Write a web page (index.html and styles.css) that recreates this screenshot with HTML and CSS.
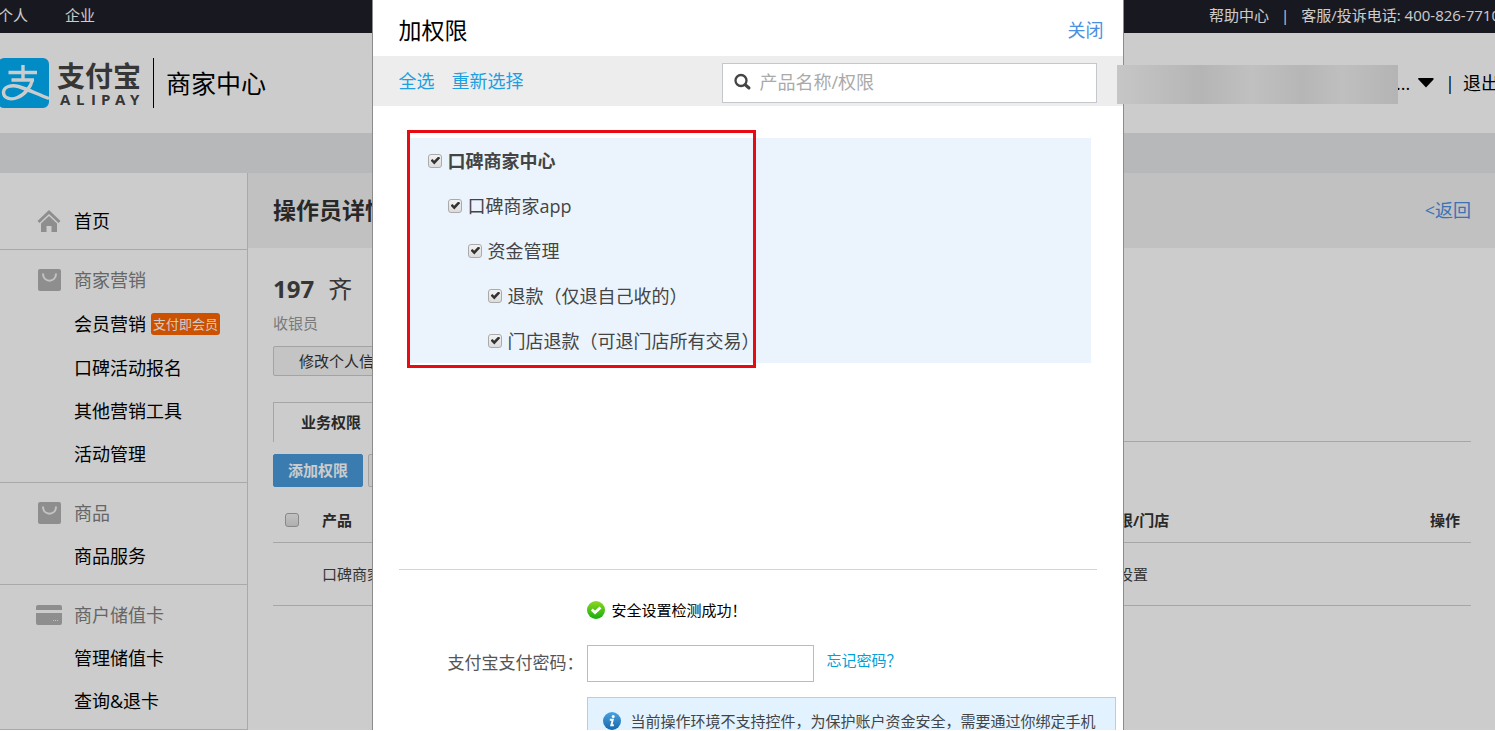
FILE: index.html
```html
<!DOCTYPE html>
<html lang="zh-CN">
<head>
<meta charset="utf-8">
<title>商家中心</title>
<meta name="viewport" content="width=device-width, initial-scale=1">
<link rel="stylesheet" href="styles.css">
</head>
<body>
<div class="app">
  <nav class="topbar">
    <a class="topbar-link" href="#">个人</a>
    <a class="topbar-link" href="#">企业</a>
    <div class="topbar-right">
      <a class="topbar-link" href="#">帮助中心</a>
      <span>|</span>
      <span>客服/投诉电话: 400-826-7710</span>
    </div>
  </nav>

  <header class="header">
    <svg class="logo" width="143" height="50" viewBox="0 0 143 50" role="img" aria-label="支付宝 ALIPAY">
      <rect x="-2" y="0" width="51" height="50" rx="6" fill="#02b0f8"/>
      <g fill="none" stroke="#fff" stroke-width="3.4">
        <path d="M8.500 14.500H37M23 7V22M11.500 22H34"/>
        <path d="M32.500 21.500C31 29 25 36.500 17.500 39.500C10.500 42.500 3.500 40 3.500 34.500C3.500 28.500 11.500 26.500 18.500 28.500C27 31 38 36.500 49 40.500"/>
      </g>
      <text class="logo-cn" x="57" y="29">支付宝</text>
      <text class="logo-en" x="60 76 91 101 115 130" y="47">ALIPAY</text>
    </svg>
    <span class="header-name">商家中心</span>
    <div class="user">
      <span>...</span>
      <svg width="16" height="10" viewBox="0 0 16 10" aria-hidden="true"><path d="M0 1Q0 0 1 0H15Q16 0 15.500 1.500L8 9.500L.5 1.500Z"/></svg>
      <span class="user-divider">|</span>
      <a class="user-exit" href="#">退出</a>
    </div>
  </header>
  <div class="band"></div>

  <div class="layout">
    <aside class="sidebar">
      <section class="group group-home">
        <a class="group-title is-home" href="#">
          <svg class="icon" width="26" height="24" viewBox="0 0 26 24"><path d="M13 1L24.500 12L22.500 14L13 5L3.500 14L1.500 12Z"/><path d="M13 7L21 14.500V23H15.500V17H10.500V23H5V14.500Z"/></svg>
          首页</a>
      </section>
      <section class="group">
        <h3 class="group-title">
          <svg class="icon" width="26" height="24" viewBox="0 0 26 24"><rect x="2" y="1" width="23" height="22" rx="2"/><path class="icon-line" d="M7 5.500C7 15 20 15 20 5.500"/></svg>
          商家营销</h3>
        <a class="item item-tagged" href="#">会员营销<span class="tag">支付即会员</span></a>
        <a class="item" href="#">口碑活动报名</a>
        <a class="item" href="#">其他营销工具</a>
        <a class="item" href="#">活动管理</a>
      </section>
      <section class="group">
        <h3 class="group-title">
          <svg class="icon" width="26" height="24" viewBox="0 0 26 24"><rect x="2" y="1" width="23" height="22" rx="2"/><path class="icon-line" d="M7 5.500C7 15 20 15 20 5.500"/></svg>
          商品</h3>
        <a class="item" href="#">商品服务</a>
      </section>
      <section class="group">
        <h3 class="group-title">
          <svg class="icon" width="26" height="24" viewBox="0 0 26 24"><path d="M0 7V4Q0 2 2 2H24Q26 2 26 4V7ZM0 10H26V20Q26 22 24 22H2Q0 22 0 20Z"/><path class="icon-dots" d="M17 17.500H23"/></svg>
          商户储值卡</h3>
        <a class="item" href="#">管理储值卡</a>
        <a class="item" href="#">查询&amp;退卡</a>
      </section>
    </aside>

    <main class="main">
      <div class="title-bar">
        <h1 class="title">操作员详情</h1>
        <a class="back" href="#">&lt;返回</a>
      </div>
      <div class="content">
        <div class="operator"><strong class="operator-id">197</strong><span>齐</span></div>
        <p class="role">收银员</p>
        <button class="btn btn-edit" type="button">修改个人信息</button>
        <div class="tabs"><button class="tab" type="button">业务权限</button></div>
        <div class="actions">
          <button class="btn btn-primary" type="button">添加权限</button>
          <button class="btn" type="button">删除权限</button>
        </div>
        <table class="perms">
          <thead>
            <tr><th class="col-check"><input class="check" type="checkbox" aria-label="全选产品"></th><th>产品</th><th class="col-store">权限/门店</th><th class="col-op">操作</th></tr>
          </thead>
          <tbody>
            <tr><td></td><td>口碑商家中心</td><td>未设置</td><td></td></tr>
          </tbody>
        </table>
      </div>
    </main>
  </div>
</div>

<div class="overlay">
  <div class="modal" role="dialog" aria-labelledby="modal-title">
    <div class="modal-head">
      <h2 class="modal-title" id="modal-title">加权限</h2>
      <a class="close" href="#">关闭</a>
    </div>
    <div class="toolbar">
      <a class="toolbar-link" href="#">全选</a>
      <a class="toolbar-link" href="#">重新选择</a>
      <label class="search">
        <svg width="18" height="18" viewBox="0 0 18 18" aria-hidden="true"><circle cx="7" cy="7.500" r="5.500" fill="none" stroke="#444" stroke-width="2.300"/><path d="M11.500 12L15 15" stroke="#444" stroke-width="3" stroke-linecap="round"/></svg>
        <input class="search-input" type="text" placeholder="产品名称/权限" aria-label="产品名称/权限">
      </label>
    </div>
    <div class="modal-body">
      <div class="tree-area">
        <div class="tree">
          <label class="node node-root"><input class="check" type="checkbox" checked>口碑商家中心</label>
          <label class="node level-1"><input class="check" type="checkbox" checked>口碑商家app</label>
          <label class="node level-2"><input class="check" type="checkbox" checked>资金管理</label>
          <label class="node level-3"><input class="check" type="checkbox" checked>退款（仅退自己收的）</label>
          <label class="node level-3"><input class="check" type="checkbox" checked>门店退款（可退门店所有交易）</label>
          <div class="highlight"></div>
        </div>
      </div>
      <form class="verify">
        <p class="verify-ok">
          <svg width="18" height="18" viewBox="0 0 18 18" aria-hidden="true">
            <defs><linearGradient id="ok" x2="0" y2="1"><stop offset="0" stop-color="#8fd820"/><stop offset="1" stop-color="#14ad10"/></linearGradient></defs>
            <circle cx="9" cy="9" r="9" fill="url(#ok)"/><path d="M4.800 8.500L8 11.500L13.500 6.500" fill="none" stroke="#fff" stroke-width="2.800"/></svg>
          安全设置检测成功！</p>
        <label class="verify-label" for="pay-password">支付宝支付密码：</label>
        <input class="password" id="pay-password" type="password">
        <a class="forgot" href="#">忘记密码？</a>
        <p class="notice">
          <svg width="18" height="18" viewBox="0 0 18 18" aria-hidden="true">
            <defs><linearGradient id="info" x2="0" y2="1"><stop offset="0" stop-color="#4aa3de"/><stop offset="1" stop-color="#1767ad"/></linearGradient></defs>
            <circle cx="9" cy="9" r="9" fill="url(#info)"/><circle cx="10.200" cy="4.500" r="1.500" fill="#fff"/><path d="M6.800 7.800H9.800L8.300 13.300H10.800" fill="none" stroke="#fff" stroke-width="1.900"/></svg>
          当前操作环境不支持控件，为保护账户资金安全，需要通过你绑定手机</p>
      </form>
    </div>
  </div>
</div>
<div class="mask"></div>
</body>
</html>
```

FILE: styles.css
```css
* {
  box-sizing: border-box;
}

body {
  margin: 0;
  height: 100vh;
  overflow: hidden;
  position: relative;
  background: #fff;
  color: #000;
  font-family: "Open Sans", "Noto Sans CJK SC", sans-serif;
  font-size: 18px;
  line-height: 24px;
}

h1, h2, h3, p {
  margin: 0;
  font-weight: 400;
}

a {
  color: inherit;
  text-decoration: none;
}

button, input {
  font-family: inherit;
}

.app {
  display: flex;
  flex-direction: column;
  height: calc(100vh - 1px);
  overflow: hidden;
  white-space: nowrap;
}

/* Top bar */
.topbar {
  display: flex;
  flex: none;
  align-items: center;
  gap: 37px;
  height: 33px;
  margin: 0 -5px 0 -2px;
  padding-bottom: 3px;
  background: #1f1e29;
  color: #fff;
  font-size: 15px;
}

.topbar-right {
  display: flex;
  gap: 12px;
  margin-left: auto;
}

/* Header */
.header {
  display: flex;
  flex: none;
  align-items: center;
  height: 100px;
}

.logo-cn {
  font-size: 28px;
  font-weight: 700;
  fill: #444;
}

.logo-en {
  font-family: "Open Sans", sans-serif;
  font-size: 15px;
  font-weight: 700;
  fill: #444;
}

.header-name {
  margin-left: 10px;
  padding-left: 12px;
  border-left: 1px solid #000;
  font-size: 25px;
  line-height: 50px;
}

.user {
  display: flex;
  align-items: center;
  gap: 8px;
  margin: 0 -4px 0 auto;
}

.user-divider {
  padding-left: 3px;
}

.band {
  flex: none;
  height: 40px;
  background: #e5e6e8;
}

.layout {
  display: flex;
  flex: 1;
  min-height: 0;
}

/* Sidebar */
.sidebar {
  flex: none;
  width: 248px;
  border-right: 1px solid #d4d4d4;
  overflow: hidden;
}

.group {
  padding: 8px 0 7px;
  border-bottom: 1px solid #d4d4d4;
}

.group-home {
  padding-top: 26px;
}

.group-title {
  display: flex;
  align-items: center;
  gap: 12px;
  height: 43px;
  padding-left: 36px;
  color: #808080;
  font-size: 18px;
}

.is-home {
  color: #000;
}

.icon {
  fill: #b2b2b2;
}

.icon-line {
  fill: none;
  stroke: #f4f4f4;
  stroke-width: 2;
}

.icon-dots {
  stroke: #f4f4f4;
  stroke-width: 1;
  stroke-dasharray: 1 1;
}

.item {
  display: flex;
  align-items: center;
  height: 43px;
  padding-left: 74px;
}

.item-tagged {
  height: 45px;
}

.tag {
  margin-left: 5px;
  padding: 0 2px;
  border-radius: 3px;
  background: #ff6600;
  color: #fff;
  font-size: 13px;
  line-height: 22px;
}

/* Operator page */
.main {
  flex: 1;
  min-width: 0;
}

.title-bar {
  display: flex;
  align-items: center;
  justify-content: space-between;
  height: 75px;
  padding: 0 24px 2px 25px;
  background: #f2f2f2;
}

.title {
  color: #333;
  font-size: 23px;
  font-weight: 700;
}

.back {
  color: #4a90e2;
}

.content {
  padding: 27px 24px 0 25px;
  color: #444;
  font-size: 15px;
}

.operator {
  display: flex;
  gap: 14px;
  font-size: 24px;
  line-height: 28px;
}

.role {
  padding: 8px 0 11px;
  color: #999;
}

.btn {
  height: 33px;
  padding: 0 14px 2px;
  border: 1px solid #ccc;
  border-radius: 2px;
  background: #f5f5f5;
  color: #333;
  font-size: 15px;
}

.btn-edit {
  display: block;
  height: 30px;
  padding: 0 25px 2px;
}

.btn-primary {
  border-color: #4a9cdc;
  background: #4a9cdc;
  color: #fff;
  font-weight: 700;
}

.tabs {
  margin-top: 26px;
  height: 40px;
  border-bottom: 1px solid #d0d0d0;
}

.tab {
  height: 40px;
  padding: 0 27px 2px;
  border: 1px solid #d0d0d0;
  border-bottom: 0;
  background: #fff;
  color: #333;
  font-size: 15px;
  font-weight: 700;
}

.actions {
  display: flex;
  gap: 5px;
  padding: 12px 0;
}

.perms {
  width: 100%;
  border-collapse: collapse;
  table-layout: fixed;
  text-align: left;
}

.perms th {
  height: 43px;
  padding: 0;
  border-bottom: 1px solid #d0d0d0;
  color: #333;
}

.perms td {
  height: 63px;
  padding: 0;
  border-bottom: 1px solid #d0d0d0;
}

.perms .col-check {
  width: 49px;
  padding-left: 12px;
}

.perms .col-store {
  width: 327px;
}

.perms .col-op {
  width: 41px;
}

/* Checkboxes */
.check {
  display: block;
  flex: none;
  appearance: none;
  width: 14px;
  height: 14px;
  margin: 0;
  padding: 2px;
  border: 1px solid #aaa;
  border-radius: 3px;
  background: linear-gradient(#f2f2f2, #dcdcdc);
}

.check:checked::before {
  content: "";
  display: block;
  width: 10px;
  height: 8px;
  background: #333;
  clip-path: polygon(0 50%, 20% 30%, 36% 52%, 78% 0, 98% 18%, 38% 100%);
}

/* Dialog */
.overlay {
  position: absolute;
  inset: 0 0 1px;
  display: flex;
  justify-content: center;
  background: rgba(0, 0, 0, 0.2);
}

.modal {
  width: 752px;
  overflow: hidden;
  border: solid #8c8c8c;
  border-width: 0 1px;
  background: #fff;
}

.modal-head {
  display: flex;
  align-items: center;
  justify-content: space-between;
  height: 56px;
  padding: 3px 19px 0 26px;
}

.modal-title {
  font-size: 23px;
}

.close {
  color: #4a90e2;
}

.toolbar {
  display: flex;
  align-items: center;
  gap: 17px;
  height: 50px;
  padding: 0 26px;
  background: #ededed;
  color: #1e9fe0;
}

.search {
  display: flex;
  align-items: center;
  gap: 8px;
  width: 375px;
  height: 40px;
  margin: 4px 0 0 auto;
  padding: 0 11px 2px;
  border: 1px solid #c4c8cc;
  background: #fff;
}

.search-input {
  flex: 1;
  min-width: 0;
  padding: 0;
  border: 0;
  outline: 0;
  background: none;
  font-size: 18px;
}

.search-input::placeholder {
  color: #aaa;
}

.modal-body {
  padding: 32px 26px 0;
}

.tree-area {
  min-height: 432px;
  padding: 0 6px 0 10px;
  border-bottom: 1px solid #d4d4d4;
}

.tree {
  position: relative;
  background: #ebf4fc;
  color: #444;
}

.node {
  display: flex;
  align-items: center;
  gap: 6px;
  height: 45px;
  padding-left: 19px;
}

.node-root {
  font-weight: 700;
}

.level-1 {
  padding-left: 39px;
}

.level-2 {
  padding-left: 59px;
}

.level-3 {
  padding-left: 79px;
}

.highlight {
  position: absolute;
  inset: -8px auto -5px -2px;
  width: 349px;
  border: 3px solid #e60c12;
  pointer-events: none;
}

/* Payment password */
.verify {
  display: grid;
  grid-template-columns: 139px 227px 1fr;
  align-items: center;
  margin: 0 -19px 0 49px;
  padding-top: 28px;
  font-family: "Noto Sans CJK SC", sans-serif;
  font-size: 15px;
}

.verify-ok {
  display: flex;
  grid-column: 2 / 4;
  align-items: center;
  gap: 7px;
  margin-bottom: 23px;
}

.verify-label {
  padding-bottom: 3px;
  color: #555;
  font-size: 17px;
}

.password {
  width: 100%;
  height: 37px;
  border: 1px solid #bbb;
  background: #fff;
}

.forgot {
  padding: 0 0 7px 13px;
  color: #00a0d8;
}

.notice {
  display: flex;
  grid-column: 2 / 4;
  align-items: center;
  gap: 10px;
  height: 48px;
  margin-top: 15px;
  padding-left: 15px;
  border: 1px solid #b4d0e0;
  background: #e2f3ff;
  color: #444;
  white-space: nowrap;
}

/* Blurred account name */
.mask {
  position: absolute;
  top: 65px;
  right: 97px;
  width: 281px;
  height: 39px;
  background: linear-gradient(90deg, #c6c6c6, #b5b5b5 30%, #c0c0c0 48%, #b6b6b6 66%, #bfbfbf 80%, #b4b4b4);
}
```
